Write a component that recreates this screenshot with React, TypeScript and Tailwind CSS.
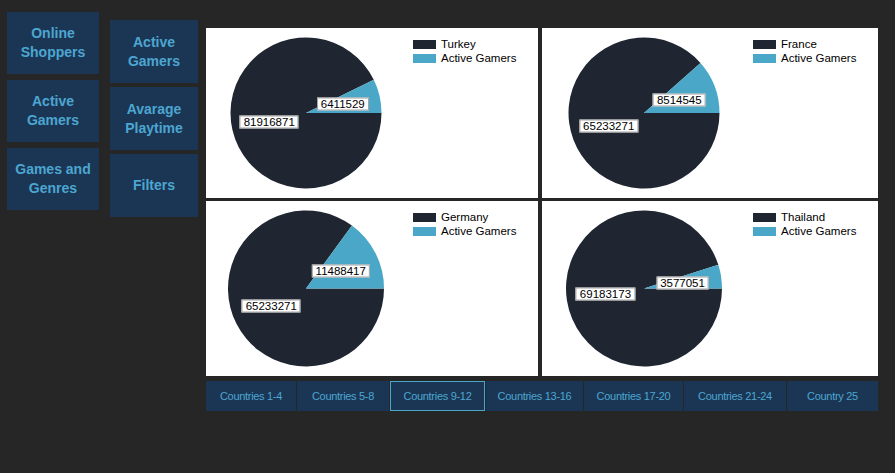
import React from 'react'

type Chart = { country: string; total: number; gamers: number }

const charts: Chart[] = [
    { country: 'Turkey', total: 81916871, gamers: 6411529 },
    { country: 'France', total: 65233271, gamers: 8514545 },
    { country: 'Germany', total: 65233271, gamers: 11488417 },
    { country: 'Thailand', total: 69183173, gamers: 3577051 },
]

const tabs = [
    { label: 'Countries 1-4', w: 'w-[90px]' },
    { label: 'Countries 5-8', w: 'w-[92px]' },
    { label: 'Countries 9-12', w: 'w-[95px]' },
    { label: 'Countries 13-16', w: 'w-[97px]' },
    { label: 'Countries 17-20', w: 'w-[99px]' },
    { label: 'Countries 21-24', w: 'w-[102px]' },
    { label: 'Country 25', w: 'w-[91px]' },
]

const DARK = '#1f2632'
const LIGHT = '#4ba7c7'

const NavButton: React.FC<{ className: string; children: React.ReactNode }> = ({ className, children }) => (
    <button
        className={`bg-[#1b3654] text-[#4ca6d1] font-bold text-[14px] leading-[19px] flex items-center justify-center text-center ${className}`}
    >
        {children}
    </button>
)

const Pie: React.FC<{ chart: Chart; width: number; height: number }> = ({ chart, width, height }) => {
    const cx = width / 2
    const cy = height / 2
    const r = height / 2 - 9.5
    const sum = chart.total + chart.gamers
    const frac = chart.gamers / sum
    // dark slice runs clockwise from 3 o'clock, gamers slice closes the circle
    const a = 2 * Math.PI * (1 - frac)
    const px = cx + r * Math.cos(a)
    const py = cy + r * Math.sin(a)
    const darkPath = `M${cx},${cy} L${cx + r},${cy} A${r},${r} 0 1 1 ${px},${py} Z`
    const lightPath = `M${cx},${cy} L${px},${py} A${r},${r} 0 0 1 ${cx + r},${cy} Z`
    const darkMid = a / 2
    const lightMid = a + (2 * Math.PI - a) / 2
    const lr = r * 0.5
    const labels = [
        { v: chart.total, x: cx + lr * Math.cos(darkMid), y: cy + lr * Math.sin(darkMid) },
        { v: chart.gamers, x: cx + lr * Math.cos(lightMid), y: cy + lr * Math.sin(lightMid) },
    ]
    return (
        <div className="relative shrink-0" style={{ width, height }}>
            <svg width={width} height={height}>
                <path d={darkPath} fill={DARK} />
                <path d={lightPath} fill={LIGHT} />
            </svg>
            {labels.map((l) => (
                <span
                    key={l.v}
                    className="absolute -translate-x-1/2 -translate-y-1/2 bg-white border border-[#a0a0a0] px-[3px] text-[11.5px] leading-[11px] text-black whitespace-nowrap"
                    style={{ left: l.x, top: l.y }}
                >
                    {l.v}
                </span>
            ))}
        </div>
    )
}

const ChartPanel: React.FC<{ chart: Chart; width: number; height: number }> = ({ chart, width, height }) => (
    <div className="bg-white flex" style={{ width, height }}>
        <Pie chart={chart} width={width - 132} height={height} />
        <div className="w-[132px] pl-[7px] pt-[9px] flex flex-col text-[11.5px] leading-[14px] text-black">
            <div className="flex items-center gap-[5px]">
                <span className="w-[23px] h-[9px] bg-[#1f2632]" />
                <span>{chart.country}</span>
            </div>
            <div className="flex items-center gap-[5px]">
                <span className="w-[23px] h-[9px] bg-[#4ba7c7]" />
                <span>Active Gamers</span>
            </div>
        </div>
    </div>
)

const App: React.FC = () => {
    return (
        <div
            className="w-[895px] h-[473px] bg-[#262626] flex items-start"
            style={{ fontFamily: '"Liberation Sans", Arial, sans-serif' }}
        >
            <div className="flex flex-col gap-[6px] ml-[7px] mt-[12px]">
                <NavButton className="w-[92px] h-[62px]">
                    Online
                    <br />
                    Shoppers
                </NavButton>
                <NavButton className="w-[92px] h-[62px]">
                    Active
                    <br />
                    Gamers
                </NavButton>
                <NavButton className="w-[92px] h-[62px]">
                    Games and
                    <br />
                    Genres
                </NavButton>
            </div>
            <div className="flex flex-col gap-[4px] ml-[11px] mt-[20px]">
                <NavButton className="w-[88px] h-[63px]">
                    Active
                    <br />
                    Gamers
                </NavButton>
                <NavButton className="w-[88px] h-[63px]">
                    Avarage
                    <br />
                    Playtime
                </NavButton>
                <NavButton className="w-[88px] h-[63px]">Filters</NavButton>
            </div>
            <div className="flex flex-col ml-[8px] mt-[28px]">
                <div className="flex flex-col gap-[3px]">
                    <div className="flex gap-[4px]">
                        <ChartPanel chart={charts[0]} width={332} height={170} />
                        <ChartPanel chart={charts[1]} width={336} height={170} />
                    </div>
                    <div className="flex gap-[4px]">
                        <ChartPanel chart={charts[2]} width={332} height={175} />
                        <ChartPanel chart={charts[3]} width={336} height={175} />
                    </div>
                </div>
                <div className="flex gap-px mt-[5px] h-[30px]">
                    {tabs.map((t, i) => (
                        <div
                            key={t.label}
                            className={`${t.w} h-full bg-[#1b3654] text-[#4ca6d1] text-[11px] tracking-[-0.3px] flex items-center justify-center ${
                                i === 2 ? 'border border-[#4ba7c7]' : ''
                            }`}
                        >
                            {t.label}
                        </div>
                    ))}
                </div>
            </div>
        </div>
    )
}

export default App
